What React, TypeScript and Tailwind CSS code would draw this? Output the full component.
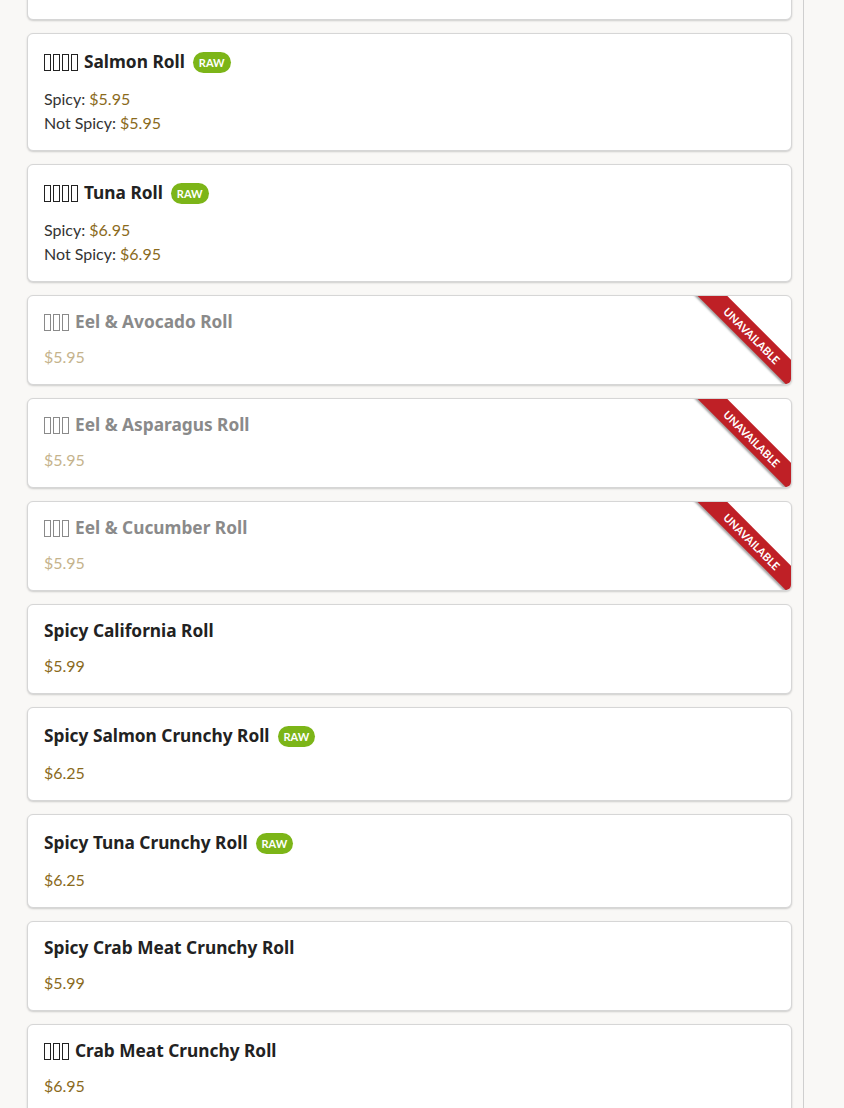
type Price = { label?: string; amount: string };

type Roll = {
  tofu?: number;
  name: string;
  raw?: boolean;
  unavailable?: boolean;
  prices: Price[];
};

const rolls: Roll[] = [
  {
    tofu: 4,
    name: "Salmon Roll",
    raw: true,
    prices: [
      { label: "Spicy", amount: "$5.95" },
      { label: "Not Spicy", amount: "$5.95" },
    ],
  },
  {
    tofu: 4,
    name: "Tuna Roll",
    raw: true,
    prices: [
      { label: "Spicy", amount: "$6.95" },
      { label: "Not Spicy", amount: "$6.95" },
    ],
  },
  { tofu: 3, name: "Eel & Avocado Roll", unavailable: true, prices: [{ amount: "$5.95" }] },
  { tofu: 3, name: "Eel & Asparagus Roll", unavailable: true, prices: [{ amount: "$5.95" }] },
  { tofu: 3, name: "Eel & Cucumber Roll", unavailable: true, prices: [{ amount: "$5.95" }] },
  { name: "Spicy California Roll", prices: [{ amount: "$5.99" }] },
  { name: "Spicy Salmon Crunchy Roll", raw: true, prices: [{ amount: "$6.25" }] },
  { name: "Spicy Tuna Crunchy Roll", raw: true, prices: [{ amount: "$6.25" }] },
  { name: "Spicy Crab Meat Crunchy Roll", prices: [{ amount: "$5.99" }] },
  { tofu: 3, name: "Crab Meat Crunchy Roll", prices: [{ amount: "$6.95" }] },
];

// glyphs the original font could not show
function Tofu({ count }: { count: number }) {
  return (
    <span className="mr-[6px] flex gap-[2px]" aria-hidden="true">
      {Array.from({ length: count }).map((_, i) => (
        <span key={i} className="block h-[17px] w-[7px] border-[1.5px] border-current" />
      ))}
    </span>
  );
}

function RollCard({ roll }: { roll: Roll }) {
  const off = roll.unavailable;
  return (
    <article className="relative overflow-hidden rounded-md border border-[#d6d6d6] bg-white px-4 py-[15px] shadow-[0_1px_2px_rgba(0,0,0,0.18)]">
      <div className={`flex items-center gap-2 ${roll.raw ? "h-[26px]" : "h-[22px]"}`}>
        <h3
          className={`flex h-[22px] items-center text-[17.3px] font-bold leading-[22px] ${off ? "text-[#8a8a8a]" : "text-[#222]"}`}
          style={{ fontFamily: '"Noto Sans", sans-serif' }}
        >
          {roll.tofu ? <Tofu count={roll.tofu} /> : null}
          {roll.name}
        </h3>
        {roll.raw && (
          <span className="rounded-full bg-[#7cb518] px-[6px] py-[4px] text-[11px] font-bold leading-[13px] text-white">
            RAW
          </span>
        )}
      </div>
      <div className="mt-3">
        {roll.prices.map((p) => (
          <p key={p.label ?? p.amount} className="h-[24px] text-[16px] leading-[24px] text-[#333]">
            {p.label && <span>{p.label}: </span>}
            <span className={off ? "text-[#c5b38c]" : "text-[#8a6a1c]"}>{p.amount}</span>
          </p>
        ))}
      </div>
      {off && (
        <div className="absolute right-[-37px] top-[29px] h-[21px] w-[152px] rotate-45 bg-[#bf2026] text-center text-[11px] font-bold leading-[21px] text-white shadow-[0_2px_2px_rgba(0,0,0,0.35)]">
          UNAVAILABLE
        </div>
      )}
    </article>
  );
}

export default function App() {
  return (
    <div
      className="h-[1108px] overflow-hidden bg-[#f9f8f6]"
      style={{ fontFamily: 'Lato, "Noto Sans", sans-serif' }}
    >
      <div className="flex h-full w-[804px] flex-col border-r border-[#cfcfcf] pl-[27px] pr-[11px]">
        <div className="-mt-[70px] flex flex-col gap-[13px]">
          <article className="h-[90px] rounded-md border border-[#d6d6d6] bg-white px-4 py-[15px] shadow-[0_1px_2px_rgba(0,0,0,0.18)]">
            <div className="h-[22px]" />
            <p className="mt-3 text-[16px] leading-[24px] text-[#c5b38c]">$5.95</p>
          </article>
          {rolls.map((roll) => (
            <RollCard key={roll.name} roll={roll} />
          ))}
        </div>
      </div>
    </div>
  );
}
